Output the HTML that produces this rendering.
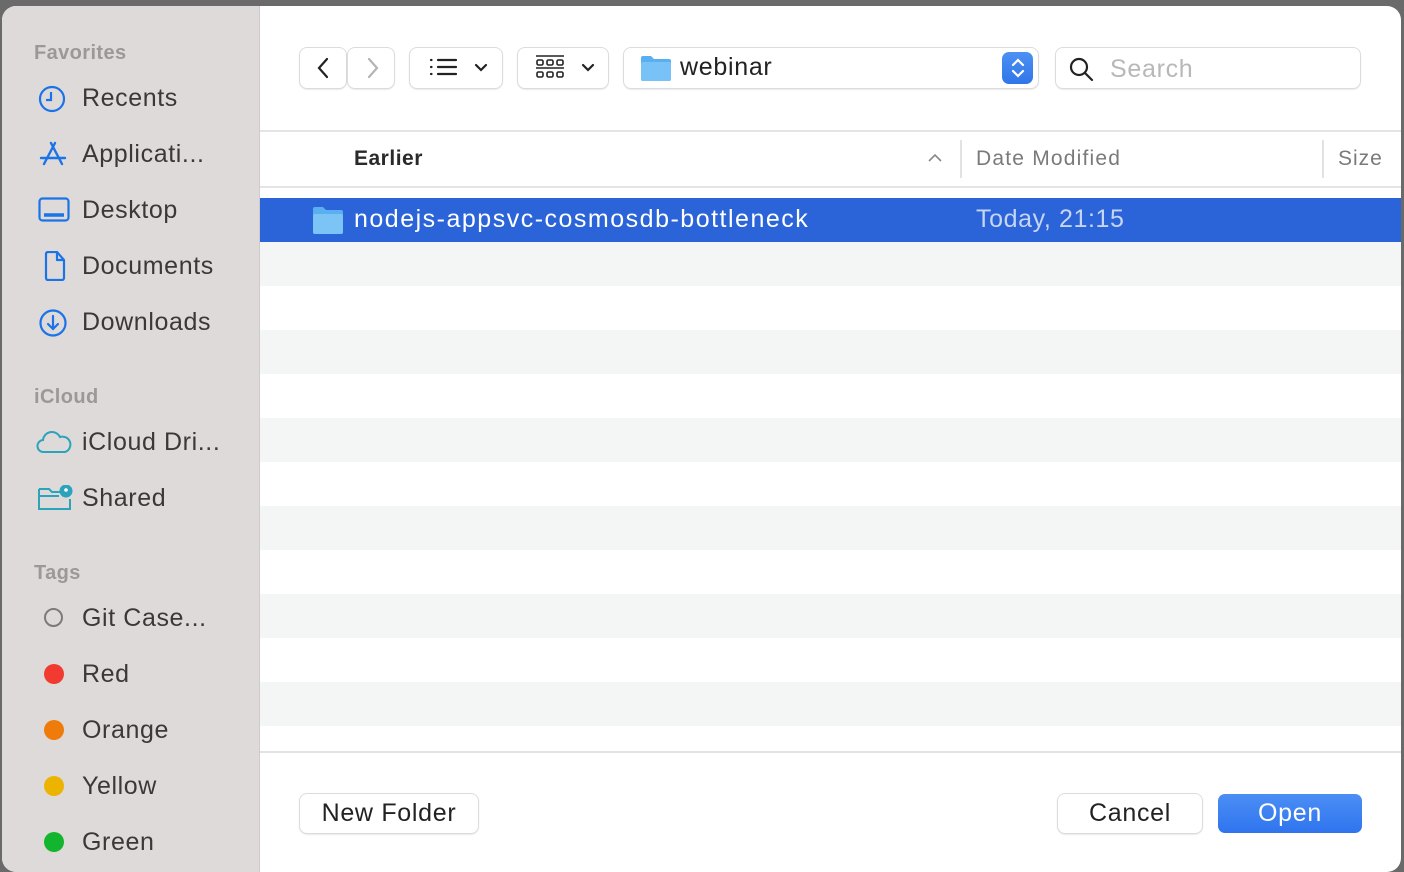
<!DOCTYPE html>
<html><head><style>
*{margin:0;padding:0;box-sizing:border-box}
body{width:1404px;height:872px;background:#6b6a6a;font-family:"Liberation Sans",sans-serif;position:relative;overflow:hidden}
.win{position:absolute;left:2px;top:6px;width:1399px;height:866px;background:#fff;border-radius:14px;overflow:hidden}
.side{position:absolute;left:0;top:0;width:258px;height:100%;background:#dedad9;border-right:1px solid #cfcbca}
.sh{position:absolute;left:32px;font-size:20px;font-weight:bold;color:#9c9898;letter-spacing:.4px}
.si{position:absolute;left:80px;font-size:25px;color:#3a3838;letter-spacing:.6px;top:2px}
.ic{position:absolute;left:36px}
.dot{position:absolute;left:42px;width:20px;height:20px;border-radius:50%}
.a{position:absolute}
.btn{position:absolute;background:#fff;border-radius:7px;box-shadow:0 0 0 1px #dcdcdc,0 1px 2px rgba(0,0,0,.2)}
.row{position:absolute;left:258px;width:1141px;height:44px}
.t{letter-spacing:.7px}
</style></head><body>
<div class="win">
<div class="side">
<div class="sh" style="top:36px">Favorites</div>
<svg class="ic" style="top:79px" width="28" height="28" viewBox="0 0 28 28" fill="none" stroke="#1a73e8" stroke-width="2.2"><circle cx="14" cy="14" r="12"/><path d="M13 7v8h-5"/></svg>
<div class="si" style="top:78px">Recents</div>
<svg class="ic" style="top:134px" width="30" height="28" viewBox="0 0 30 28" fill="none" stroke="#1a73e8" stroke-width="2.4" stroke-linecap="round"><path d="M17 3L6 24M13 3l11 21M3 18h24"/></svg>
<div class="si" style="top:134px">Applicati...</div>
<svg class="ic" style="top:191px" width="32" height="26" viewBox="0 0 32 26" fill="none" stroke="#1a73e8" stroke-width="2.2"><rect x="1.5" y="1.5" width="29" height="22" rx="3"/><path d="M6 18h20" stroke-width="3.5"/></svg>
<div class="si" style="top:190px">Desktop</div>
<svg class="ic" style="top:245px;left:42px" width="22" height="30" viewBox="0 0 22 30" fill="none" stroke="#1a73e8" stroke-width="2.2" stroke-linejoin="round"><path d="M2 3a2 2 0 012-2h9l7 8v18a2 2 0 01-2 2H4a2 2 0 01-2-2z"/><path d="M13 1v8h7"/></svg>
<div class="si" style="top:246px">Documents</div>
<svg class="ic" style="top:302px" width="30" height="30" viewBox="0 0 30 30" fill="none" stroke="#1a73e8" stroke-width="2.2" stroke-linecap="round"><circle cx="15" cy="15" r="12.5"/><path d="M15 8v13M10 16l5 5 5-5"/></svg>
<div class="si" style="top:302px">Downloads</div>
<div class="sh" style="top:380px">iCloud</div>
<svg class="ic" style="top:424px;left:34px" width="36" height="24" viewBox="0 0 36 24" fill="none" stroke="#2aa3bb" stroke-width="2"><path d="M8 22a6 6 0 01-1-12 9 9 0 0117-3 7 7 0 015 15z"/></svg>
<div class="si" style="top:422px">iCloud Dri...</div>
<svg class="ic" style="top:479px" width="36" height="26" viewBox="0 0 36 26" fill="none" stroke="#2aa3bb" stroke-width="2"><path d="M1 4h10l3 3h8M1 4v20h31V14M1 11h20"/><circle cx="28" cy="6" r="5.5" fill="#2aa3bb"/><circle cx="28" cy="5" r="1.8" fill="#fff" stroke="none"/></svg>
<div class="si" style="top:478px">Shared</div>
<div class="sh" style="top:556px">Tags</div>
<div class="dot" style="top:602px;border:2px solid #7c7a7a;width:19px;height:19px"></div>
<div class="si" style="top:598px">Git Case...</div>
<div class="dot" style="top:658px;background:#f23b30"></div>
<div class="si" style="top:654px">Red</div>
<div class="dot" style="top:714px;background:#ef7b0b"></div>
<div class="si" style="top:710px">Orange</div>
<div class="dot" style="top:770px;background:#ecb400"></div>
<div class="si" style="top:766px">Yellow</div>
<div class="dot" style="top:826px;background:#14b52e"></div>
<div class="si" style="top:822px">Green</div>
</div>

<div class="btn" style="left:298px;top:42px;width:46px;height:40px"></div>
<div class="btn" style="left:346px;top:42px;width:46px;height:40px"></div>
<svg class="a" style="left:310px;top:49px" width="24" height="26" viewBox="0 0 24 26" fill="none" stroke="#222" stroke-width="2.2" stroke-linecap="round"><path d="M15 4l-8 9 8 9"/></svg>
<svg class="a" style="left:358px;top:49px" width="24" height="26" viewBox="0 0 24 26" fill="none" stroke="#b5b5b5" stroke-width="2.2" stroke-linecap="round"><path d="M9 4l8 9-8 9"/></svg>
<div class="btn" style="left:408px;top:42px;width:92px;height:40px"></div>
<svg class="a" style="left:426px;top:50px" width="68" height="24" viewBox="0 0 68 24" fill="none" stroke="#222" stroke-width="2.2" stroke-linecap="round"><path d="M10 4h18M10 11h18M10 18h18M3 4h.5M3 11h.5M3 18h.5"/><path d="M48 9l5 5 5-5"/></svg>
<div class="btn" style="left:516px;top:42px;width:90px;height:40px"></div>
<svg class="a" style="left:532px;top:48px" width="68" height="28" viewBox="0 0 68 28" fill="none" stroke="#222" stroke-width="1.6"><path d="M2 2h28M2 14h28"/><rect x="3" y="6" width="6" height="5" rx="1.5"/><rect x="13" y="6" width="6" height="5" rx="1.5"/><rect x="23" y="6" width="6" height="5" rx="1.5"/><rect x="3" y="18" width="6" height="5" rx="1.5"/><rect x="13" y="18" width="6" height="5" rx="1.5"/><rect x="23" y="18" width="6" height="5" rx="1.5"/><path d="M49 11l5 5 5-5" stroke-width="2.2" stroke-linecap="round"/></svg>
<div class="btn" style="left:622px;top:42px;width:414px;height:40px"></div>
<svg class="a" style="left:638px;top:48px" width="32" height="28" viewBox="0 0 32 28"><path d="M1 4a2 2 0 012-2h8l3 3h15a2 2 0 012 2v18a2 2 0 01-2 2H3a2 2 0 01-2-2z" fill="#5aaff0"/><rect x="1" y="8" width="30" height="19" rx="2" fill="#78c2f7"/></svg>
<div class="a t" style="left:678px;top:47px;font-size:25px;color:#222">webinar</div>
<div class="a" style="left:1000px;top:46px;width:31px;height:32px;border-radius:7px;background:linear-gradient(#4d90f4,#2f76e8)"></div>
<svg class="a" style="left:1006px;top:49px" width="20" height="26" viewBox="0 0 20 26" fill="none" stroke="#fff" stroke-width="2.2" stroke-linecap="round"><path d="M5 10l5-5 5 5M5 16l5 5 5-5"/></svg>
<div class="btn" style="left:1054px;top:42px;width:304px;height:40px"></div>
<svg class="a" style="left:1066px;top:50px" width="28" height="28" viewBox="0 0 28 28" fill="none" stroke="#222" stroke-width="2.2" stroke-linecap="round"><circle cx="11" cy="11" r="8"/><path d="M17 17l7 7"/></svg>
<div class="a t" style="left:1108px;top:49px;font-size:25px;color:#b8b8b8">Search</div>

<div class="a" style="left:258px;top:124px;width:1141px;height:2px;background:#e4e4e4"></div>
<div class="a" style="left:258px;top:180px;width:1141px;height:2px;background:#e4e4e4"></div>
<div class="a" style="left:352px;top:141px;font-size:21px;font-weight:bold;color:#2a2a2a;letter-spacing:.5px">Earlier</div>
<svg class="a" style="left:924px;top:145px" width="18" height="14" viewBox="0 0 18 14" fill="none" stroke="#888" stroke-width="1.6"><path d="M3 10l6-6 6 6"/></svg>
<div class="a" style="left:958px;top:134px;width:2px;height:38px;background:#e2e2e2"></div>
<div class="a" style="left:974px;top:141px;font-size:21px;color:#7a7a7a;letter-spacing:1.2px">Date Modified</div>
<div class="a" style="left:1320px;top:134px;width:2px;height:38px;background:#e2e2e2"></div>
<div class="a" style="left:1336px;top:141px;font-size:21px;color:#7a7a7a;letter-spacing:1px">Size</div>

<div class="row" style="top:192px;background:#2b64d8"></div>
<svg class="a" style="left:310px;top:199px" width="32" height="30" viewBox="0 0 32 30"><path d="M1 4a2 2 0 012-2h8l3 3h15a2 2 0 012 2v20a2 2 0 01-2 2H3a2 2 0 01-2-2z" fill="#5aaff0"/><rect x="1" y="9" width="30" height="20" rx="2" fill="#7cc3f6"/></svg>
<div class="a" style="left:352px;top:199px;font-size:25px;color:#fff;letter-spacing:1.5px">nodejs-appsvc-cosmosdb-bottleneck</div>
<div class="a" style="left:974px;top:199px;font-size:25px;color:#c6d5f3;letter-spacing:.6px">Today, 21:15</div>
<div class="row" style="top:236px;background:#f4f5f5"></div>
<div class="row" style="top:324px;background:#f4f5f5"></div>
<div class="row" style="top:412px;background:#f4f5f5"></div>
<div class="row" style="top:500px;background:#f4f5f5"></div>
<div class="row" style="top:588px;background:#f4f5f5"></div>
<div class="row" style="top:676px;background:#f4f5f5"></div>
<div class="a" style="left:258px;top:745px;width:1141px;height:2px;background:#e2e2e2"></div>

<div class="btn" style="left:298px;top:788px;width:178px;height:39px"></div>
<div class="a t" style="left:298px;top:793px;width:178px;text-align:center;font-size:25px;color:#222">New Folder</div>
<div class="btn" style="left:1056px;top:788px;width:144px;height:39px"></div>
<div class="a t" style="left:1056px;top:793px;width:144px;text-align:center;font-size:25px;color:#222">Cancel</div>
<div class="a" style="left:1216px;top:788px;width:144px;height:39px;border-radius:7px;background:linear-gradient(#4b8ef5,#2f74ee)"></div>
<div class="a t" style="left:1216px;top:793px;width:144px;text-align:center;font-size:25px;color:#fff">Open</div>
</div>
</body></html>
